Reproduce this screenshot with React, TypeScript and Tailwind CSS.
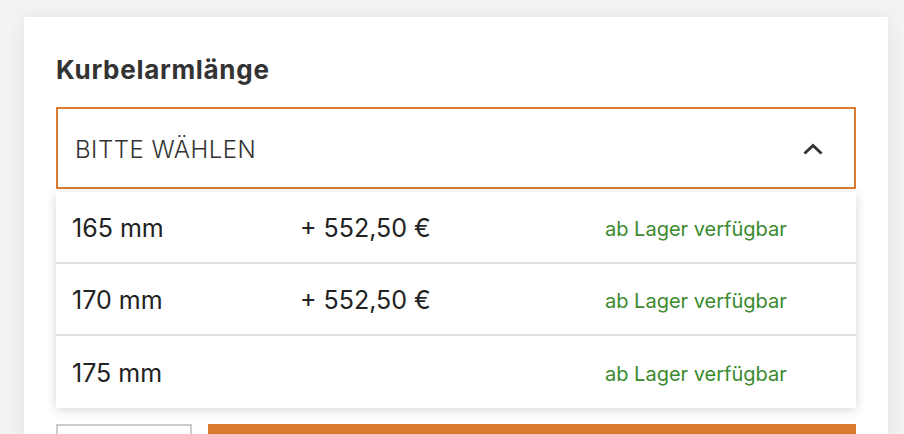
import React from "react";

const rows = [
  { size: "165 mm", price: "+ 552,50 €" },
  { size: "170 mm", price: "+ 552,50 €" },
  { size: "175 mm", price: "" },
];

export default function App() {
  return (
    <div
      className="w-[904px] h-[434px] overflow-hidden bg-[#f3f3f3] pt-[17px] pl-[24px] pr-[16px]"
      style={{ fontFamily: "Inter, 'Noto Sans', sans-serif" }}
    >
      <div className="bg-white h-[500px] px-[32px] pt-[40px] shadow-[0_0_18px_rgba(0,0,0,0.07)]">
        <h2 className="text-[26px] leading-[26px] h-[26px] font-bold text-[#333] tracking-[0.7px]">Kurbelarmlänge</h2>
        <div className="mt-[24px] h-[82px] border-2 border-[#dc7b30] flex items-center justify-between pl-[17px] pr-[30px]">
          <span className="text-[24px] text-[#333] font-light tracking-[0.5px] mt-[4px]">BITTE WÄHLEN</span>
          <svg width="22" height="14" viewBox="0 0 22 14" className="mt-[2px]">
            <path d="M2.5 11.5 L11 3.5 L19.5 11.5" fill="none" stroke="#333" strokeWidth="3" />
          </svg>
        </div>
        <div className="mt-[3px] bg-white shadow-[0_2px_10px_rgba(0,0,0,0.16)]">
          {rows.map((r, i) => (
            <div
              key={r.size}
              className={`h-[72px] flex items-center pl-[16px] pt-[4px] ${i < rows.length - 1 ? "border-b-2 border-[#e2e2e2]" : ""}`}
            >
              <span className="w-[228px] text-[25px] text-[#222]">{r.size}</span>
              <span className="w-[305px] text-[25px] text-[#222]">{r.price}</span>
              <span className="text-[20px] text-[#3b8a2e]">ab Lager verfügbar</span>
            </div>
          ))}
        </div>
        <div className="mt-[16px] flex gap-[16px]">
          <div className="w-[136px] h-[40px] border-2 border-[#cccccc] bg-white" />
          <div className="flex-1 h-[40px] bg-[#dc7b30]" />
        </div>
      </div>
    </div>
  );
}
